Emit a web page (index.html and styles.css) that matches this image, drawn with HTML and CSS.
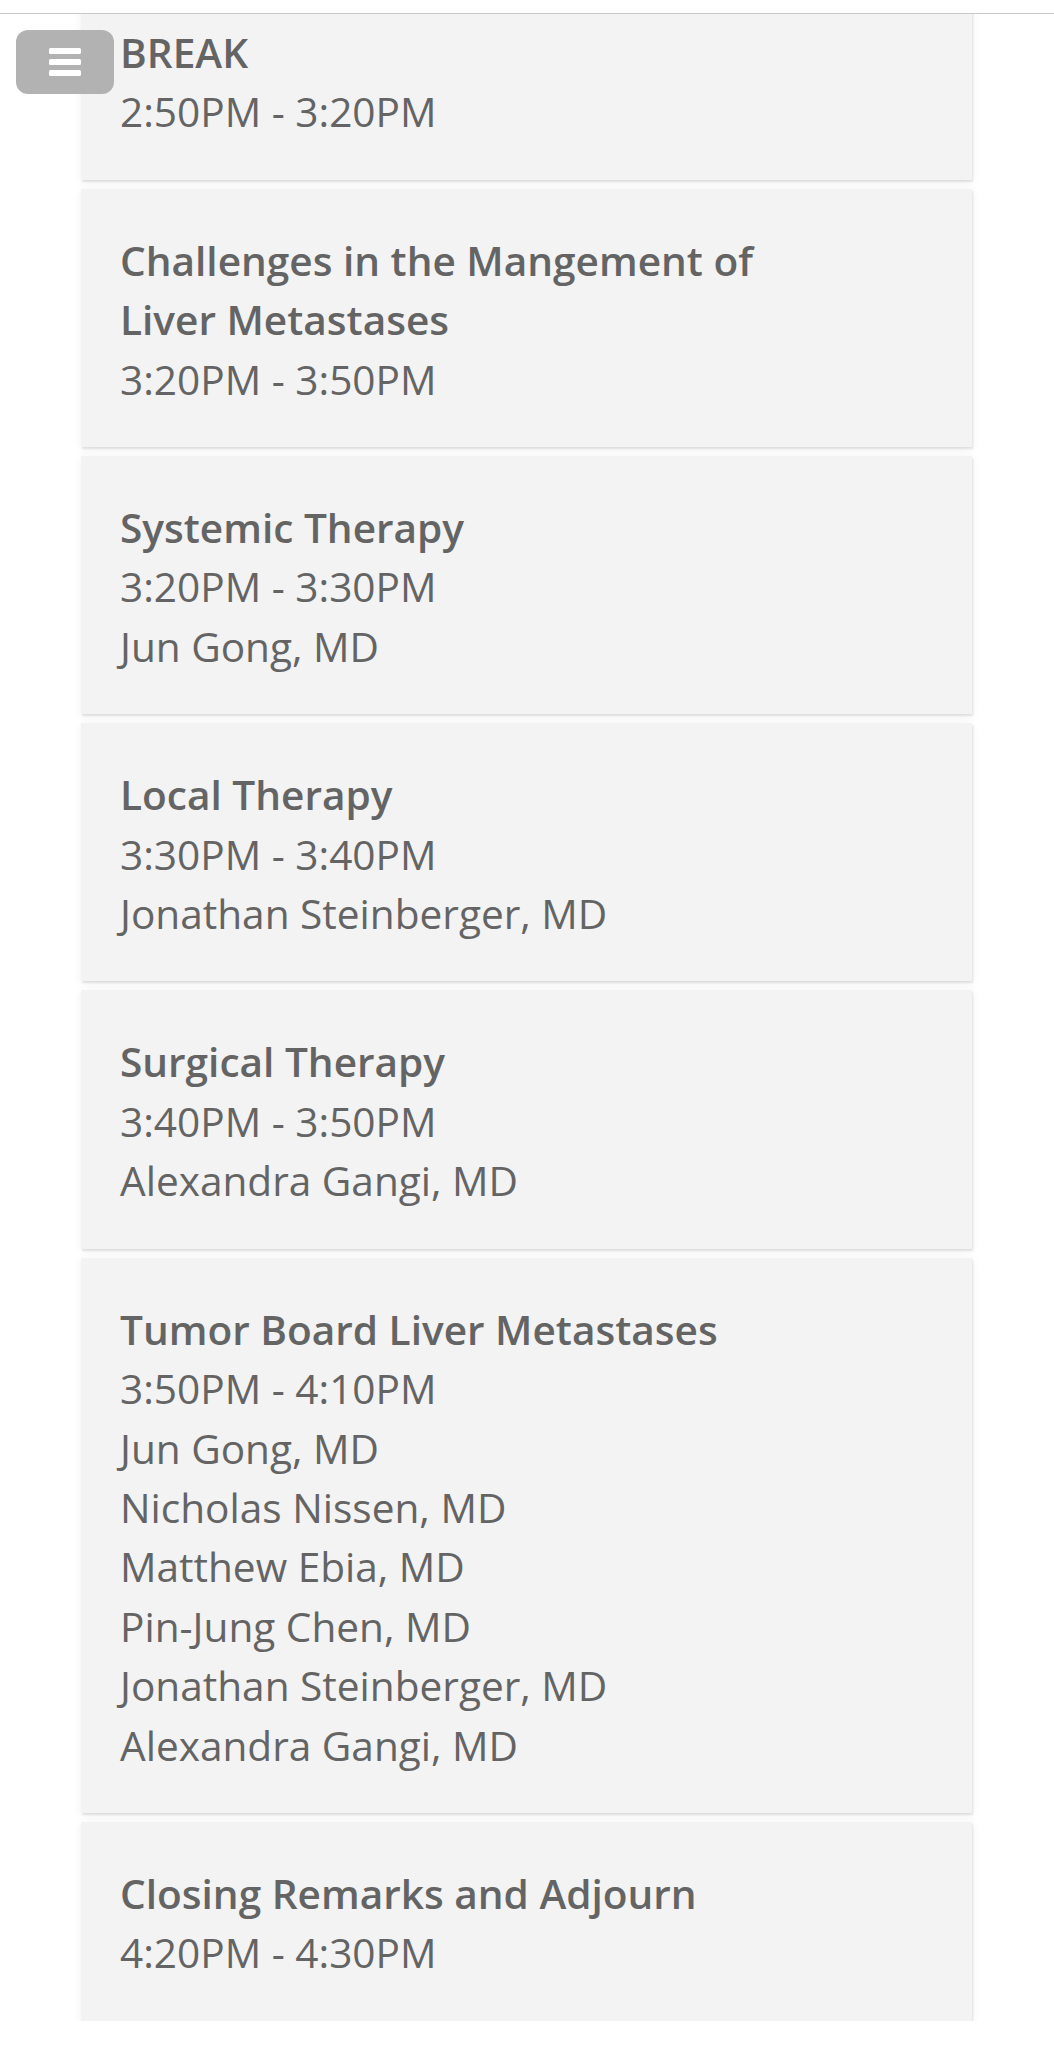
FILE: index.html
```html
<!DOCTYPE html>
<html lang="en">

<head>
    <meta charset="UTF-8">
    <meta name="viewport" content="width=device-width, initial-scale=1.0">
    <title>Agenda</title>
    <link rel="stylesheet" href="styles.css">
</head>

<body>
    <div class="topbar"></div>

    <button class="menu-btn" aria-label="Menu">
        <svg width="32" height="28" viewBox="0 0 32 28">
            <rect x="0" y="0" width="32" height="6" rx="1.5" fill="#fff" />
            <rect x="0" y="11" width="32" height="6" rx="1.5" fill="#fff" />
            <rect x="0" y="22" width="32" height="6" rx="1.5" fill="#fff" />
        </svg>
    </button>

    <div class="schedule">
        <div class="session">
            <div class="title">BREAK</div>
            <div>2:50PM - 3:20PM</div>
        </div>
        <div class="session">
            <div class="title">Challenges in the Mangement of<br>Liver Metastases</div>
            <div>3:20PM - 3:50PM</div>
        </div>
        <div class="session">
            <div class="title">Systemic Therapy</div>
            <div>3:20PM - 3:30PM</div>
            <div>Jun Gong, MD</div>
        </div>
        <div class="session">
            <div class="title">Local Therapy</div>
            <div>3:30PM - 3:40PM</div>
            <div>Jonathan Steinberger, MD</div>
        </div>
        <div class="session">
            <div class="title">Surgical Therapy</div>
            <div>3:40PM - 3:50PM</div>
            <div>Alexandra Gangi, MD</div>
        </div>
        <div class="session">
            <div class="title">Tumor Board Liver Metastases</div>
            <div>3:50PM - 4:10PM</div>
            <div>Jun Gong, MD</div>
            <div>Nicholas Nissen, MD</div>
            <div>Matthew Ebia, MD</div>
            <div>Pin-Jung Chen, MD</div>
            <div>Jonathan Steinberger, MD</div>
            <div>Alexandra Gangi, MD</div>
        </div>
        <div class="session">
            <div class="title">Closing Remarks and Adjourn</div>
            <div>4:20PM - 4:30PM</div>
        </div>
    </div>
</body>

</html>
```

FILE: styles.css
```css
body {
    margin: 0;
    background-color: #fff;
    font-family: "Open Sans", "Liberation Sans", sans-serif;
    color: #646464;
}

.topbar {
    position: relative;
    z-index: 2;
    height: 13px;
    background-color: #fff;
    border-bottom: 1px solid #c8c8c8;
}

.menu-btn {
    position: fixed;
    z-index: 3;
    top: 30px;
    left: 16px;
    width: 98px;
    height: 64px;
    padding: 0;
    border: none;
    border-radius: 12px;
    background-color: #b2b2b2;
    display: flex;
    justify-content: center;
    align-items: center;
}

.schedule {
    display: flex;
    flex-direction: column;
    gap: 9px;
    margin-top: -33px;
    padding: 0 82px 0 81px;
}

.session {
    padding: 42px 39px 38px;
    background-color: #f3f3f3;
    font-size: 40.6px;
    line-height: 59.4px;
    box-shadow: 1px 2px 2px rgba(0, 0, 0, 0.1), 0 2px 10px rgba(0, 0, 0, 0.06);
}

.title {
    font-weight: 600;
}
```
